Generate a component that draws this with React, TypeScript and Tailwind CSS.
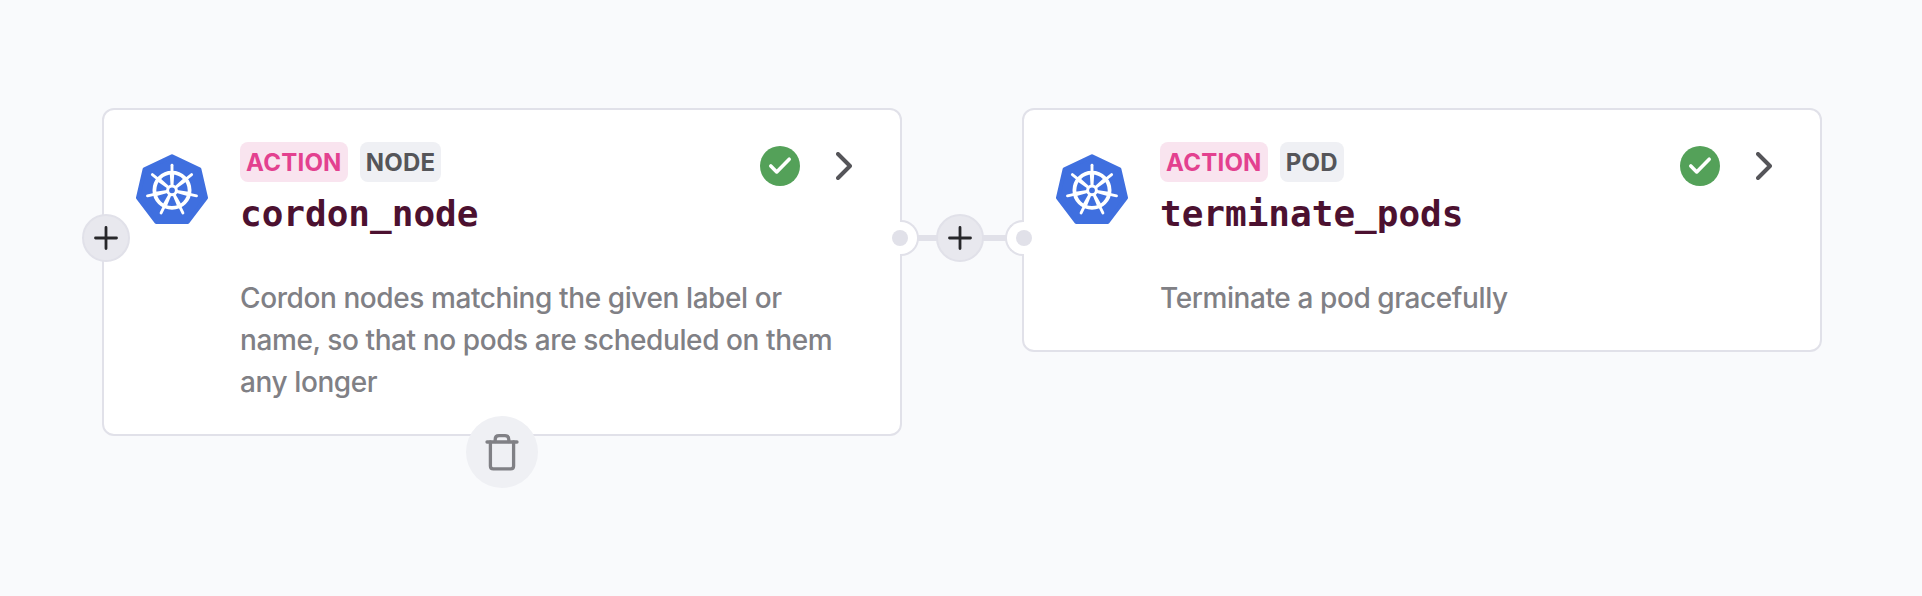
import type { ReactNode } from "react";

const SPOKES = [0, 1, 2, 3, 4, 5, 6].map((i) => (i * 360) / 7);

function KubernetesLogo() {
  return (
    <svg viewBox="0 0 72 72" className="h-[72px] w-[72px] shrink-0">
      <path
        d="M36 2.2 L63.4 15.2 L70 43.8 L51.6 68 L20.4 68 L2 43.8 L8.6 15.2 Z"
        fill="#3f6fdf"
        stroke="#3f6fdf"
        strokeWidth="4"
        strokeLinejoin="round"
      />
      <g stroke="#fff" fill="none" strokeLinecap="round">
        <circle cx="36" cy="36.3" r="17.6" strokeWidth="3.8" />
        {SPOKES.map((angle) => (
          <g key={angle} transform={`rotate(${angle} 36 36.3)`}>
            <path d="M36 18 V11.2" strokeWidth="2.9" />
            <path d="M33.8 20 H38.2 L37.4 33 H34.6 Z" fill="#fff" stroke="none" />
          </g>
        ))}
      </g>
      <circle cx="36" cy="36.3" r="4.4" fill="#3f6fdf" stroke="#fff" strokeWidth="3" />
    </svg>
  );
}

function CheckBadge() {
  return (
    <svg viewBox="0 0 40 40" className="h-10 w-10">
      <circle cx="20" cy="20" r="20" fill="#54a159" />
      <path d="M10.8 20 L16.7 25.9 L29.2 13.2" fill="none" stroke="#fff" strokeWidth="3.6" strokeLinecap="round" strokeLinejoin="round" />
    </svg>
  );
}

function Chevron() {
  return (
    <svg viewBox="0 0 16 28" className="h-7 w-4">
      <path d="M2 2 L14 14 L2 26" fill="none" stroke="#555559" strokeWidth="4" strokeLinecap="round" strokeLinejoin="round" />
    </svg>
  );
}

function AddButton() {
  return (
    <button className="flex h-12 w-12 items-center justify-center rounded-full border-2 border-[#e1e1e9] bg-[#e8e8ee]">
      <svg viewBox="0 0 24 24" className="h-6 w-6 shrink-0">
        <path d="M12 1.5 V22.5 M1.5 12 H22.5" fill="none" stroke="#27272a" strokeWidth="2.8" strokeLinecap="round" />
      </svg>
    </button>
  );
}

function TrashButton() {
  return (
    <button className="absolute top-[306px] left-[362px] flex h-[72px] w-[72px] items-center justify-center rounded-full bg-[#eff0f4]">
      <svg viewBox="0 0 36 40" className="h-10 w-9" fill="none" stroke="#808085" strokeWidth="3.3" strokeLinecap="round" strokeLinejoin="round">
        <path d="M3 10 H33" />
        <path d="M11.2 9.5 V7.5 Q11.2 3.7 15 3.7 H21 Q24.8 3.7 24.8 7.5 V9.5" />
        <path d="M6.4 10 V34 Q6.4 36.9 9.4 36.9 H26.6 Q29.6 36.9 29.6 34 V10" />
      </svg>
    </button>
  );
}

type StepProps = {
  target: string;
  name: string;
  description: string;
  children?: ReactNode;
};

function StepCard({ target, name, description, children }: StepProps) {
  return (
    <div className="relative flex w-[800px] shrink-0 items-start rounded-xl border-2 border-[#e1e1e9] bg-white pt-8 pb-[31px] pl-8">
      <div className="mt-3 shrink-0">
        <KubernetesLogo />
      </div>
      <div className="ml-8 w-[612px]">
        <div className="flex items-start">
          <div className="flex gap-3 text-2xl leading-[41px] font-bold tracking-[0.24px]">
            <span className="h-10 rounded-lg bg-[#f9e4ef] px-1.5 text-[#e3418f]">ACTION</span>
            <span className="h-10 rounded-lg bg-[#eff0f4] px-1.5 text-[#555559]">{target}</span>
          </div>
          <div className="mt-1 ml-auto flex items-center gap-9">
            <CheckBadge />
            <Chevron />
          </div>
        </div>
        <h2 className="mt-[7px] font-['DejaVu_Sans_Mono',monospace] text-4xl leading-[42px] font-bold text-[#4c1130]">{name}</h2>
        <p className="mt-[42px] text-[28px] leading-[42px] font-[450] tracking-[-0.41px] text-[#808085]">{description}</p>
      </div>
      {children}
    </div>
  );
}

function Connector() {
  return (
    <div className="relative mt-[106px] flex h-12 w-[120px] shrink-0 items-center justify-center">
      <div className="absolute top-[21px] left-4 h-1.5 w-[88px] bg-[#e1e1e9]" />
      <div className="absolute top-1.5 -left-0.5 z-10 h-9 w-[19px] rounded-r-full border-2 border-l-0 border-[#e1e1e9] bg-white" />
      <div className="absolute top-1.5 -right-0.5 z-10 h-9 w-[19px] rounded-l-full border-2 border-r-0 border-[#e1e1e9] bg-white" />
      <div className="absolute top-4 -left-2.5 z-20 h-4 w-4 rounded-full bg-[#e1e1e9]" />
      <div className="absolute top-4 -right-2.5 z-20 h-4 w-4 rounded-full bg-[#e1e1e9]" />
      <div className="relative -left-0.5">
        <AddButton />
      </div>
    </div>
  );
}

export default function App() {
  return (
    <main className="flex h-[596px] w-[1922px] items-start overflow-hidden bg-[#f9fafc] pt-[108px] pl-[102px] font-[Inter,sans-serif]">
      <StepCard
        target="NODE"
        name="cordon_node"
        description="Cordon nodes matching the given label or name, so that no pods are scheduled on them any longer"
      >
        <div className="absolute top-[104px] -left-[22px]">
          <AddButton />
        </div>
        <TrashButton />
      </StepCard>
      <Connector />
      <StepCard target="POD" name="terminate_pods" description="Terminate a pod gracefully" />
    </main>
  );
}
